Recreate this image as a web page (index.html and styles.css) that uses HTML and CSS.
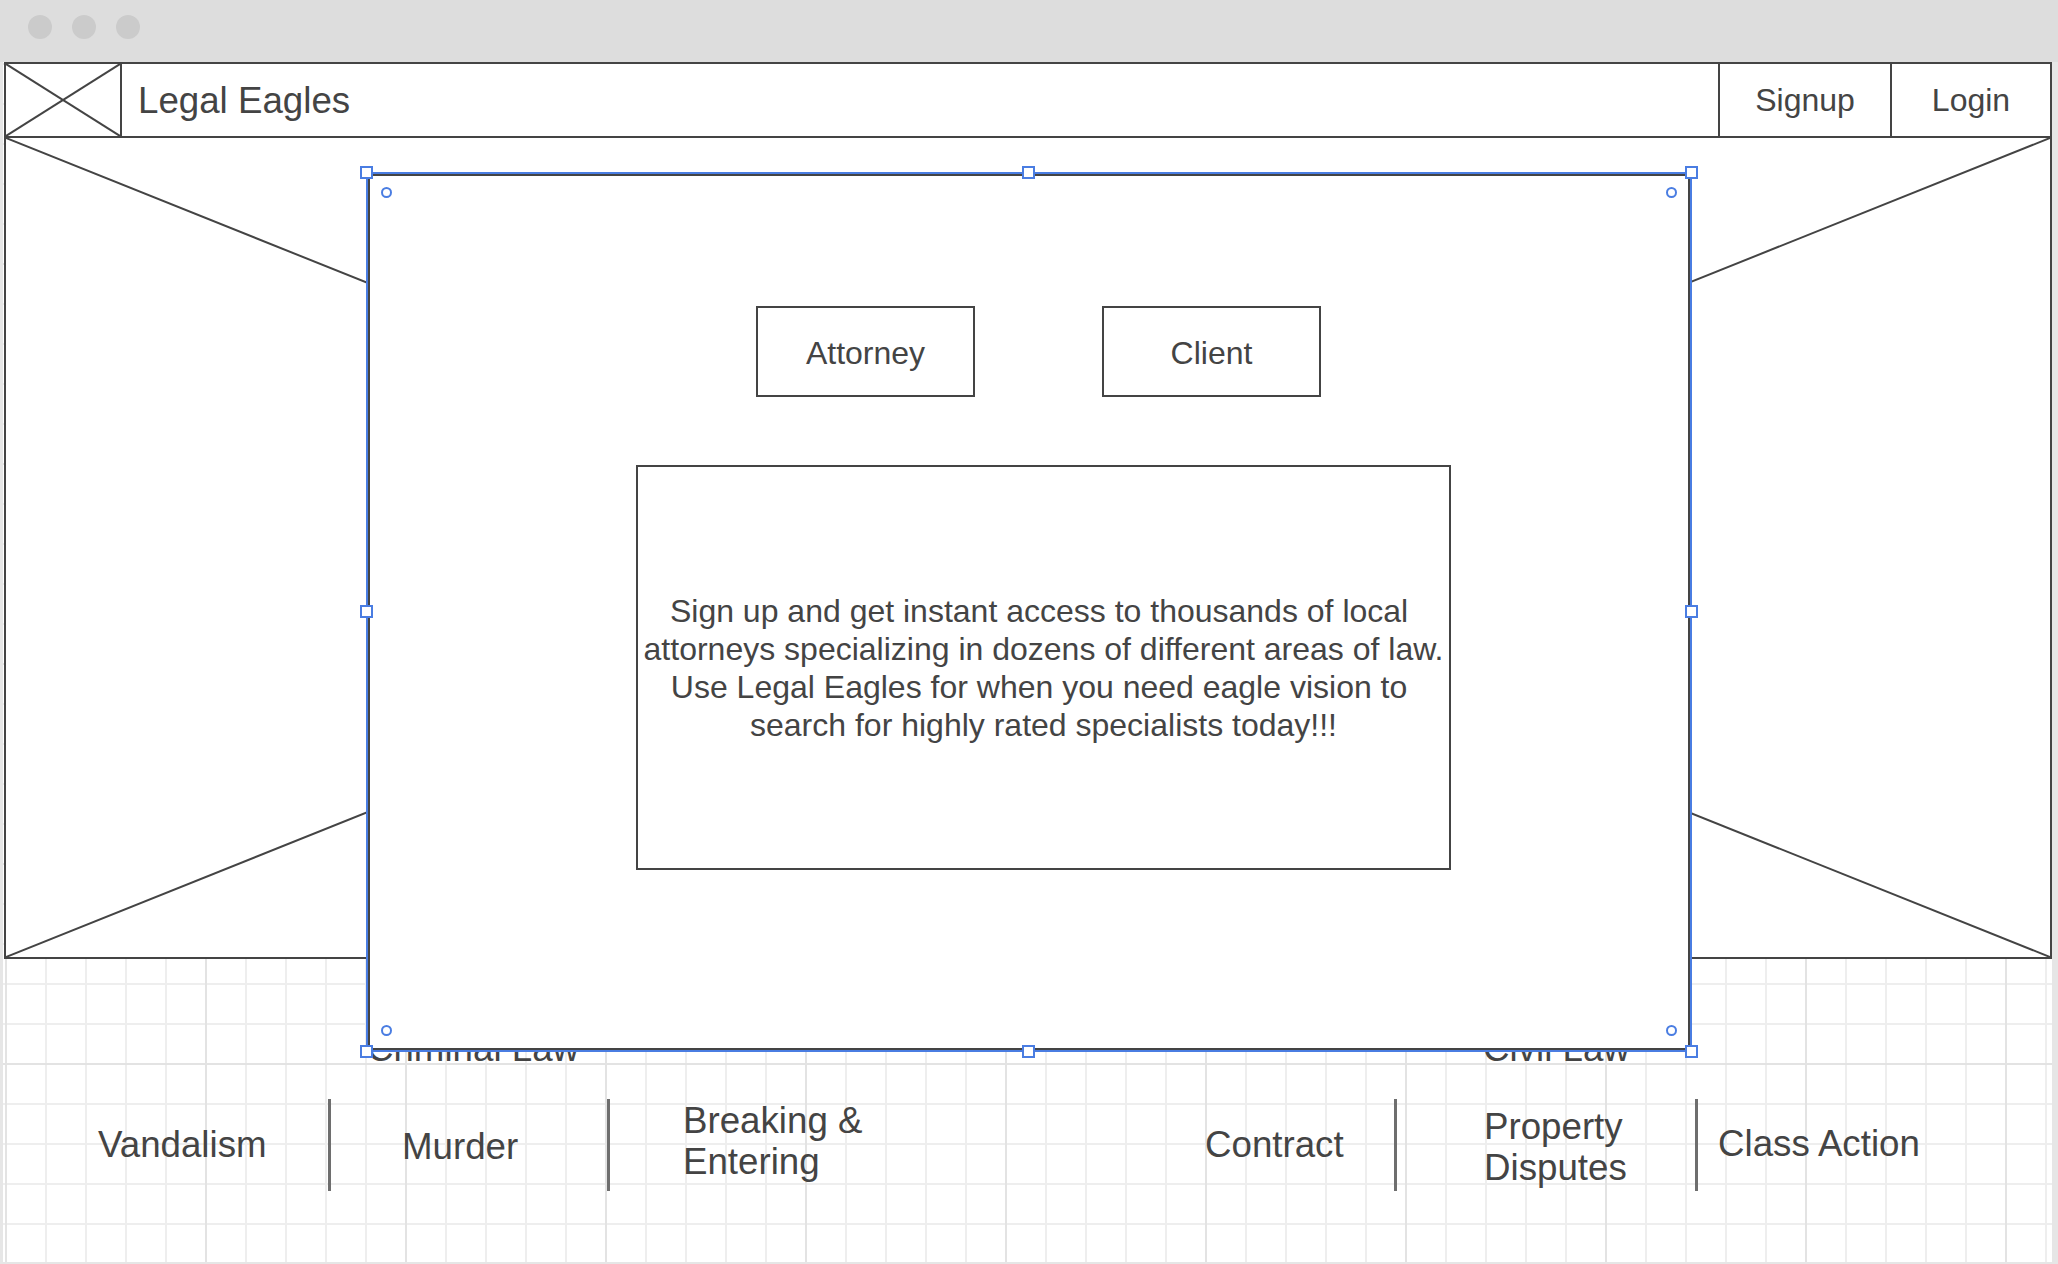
FILE: index.html
```html
<!DOCTYPE html>
<html lang="en">
<head>
  <meta charset="UTF-8" />
  <meta name="viewport" content="width=device-width, initial-scale=1.0"/>
  <title>Legal Eagles - Signup</title>
  <link rel="stylesheet" href="styles.css">
</head>
<body>
  <div class="window">
    <div class="titlebar">
      <span class="dot"></span>
      <span class="dot"></span>
      <span class="dot"></span>
    </div>

    <div class="canvas">
      <div class="page">
        <header class="nav">
          <div class="logo">
            <svg class="cross" viewBox="0 0 100 100" preserveAspectRatio="none">
              <line x1="0" y1="0" x2="100" y2="100" vector-effect="non-scaling-stroke"/>
              <line x1="100" y1="0" x2="0" y2="100" vector-effect="non-scaling-stroke"/>
            </svg>
          </div>
          <div class="brand">Legal Eagles</div>
          <a class="nav-link signup">Signup</a>
          <a class="nav-link login">Login</a>
        </header>

        <!-- hero image placeholder -->
        <div class="hero">
          <svg class="cross" viewBox="0 0 100 100" preserveAspectRatio="none">
            <line x1="0" y1="0" x2="100" y2="100" vector-effect="non-scaling-stroke"/>
            <line x1="100" y1="0" x2="0" y2="100" vector-effect="non-scaling-stroke"/>
          </svg>
        </div>

        <div class="law-heads">
          <div class="law-head criminal">Criminal Law</div>
          <div class="law-head">Civil Law</div>
        </div>

        <div class="cats">
          <div class="cat cat-vandalism">Vandalism</div>
          <div class="sep"></div>
          <div class="cat cat-murder">Murder</div>
          <div class="sep"></div>
          <div class="cat cat-breaking">Breaking &amp;<br>Entering</div>
          <div class="cat cat-contract">Contract</div>
          <div class="sep"></div>
          <div class="cat cat-property">Property<br>Disputes</div>
          <div class="sep"></div>
          <div class="cat cat-class">Class Action</div>
        </div>
      </div>
    </div>

    <!-- selected signup dialog -->
    <div class="modal">
      <span class="handle h-tl"></span>
      <span class="handle h-tm"></span>
      <span class="handle h-tr"></span>
      <span class="handle h-ml"></span>
      <span class="handle h-mr"></span>
      <span class="handle h-bl"></span>
      <span class="handle h-bm"></span>
      <span class="handle h-br"></span>
      <span class="knob k-tl"></span>
      <span class="knob k-tr"></span>
      <span class="knob k-bl"></span>
      <span class="knob k-br"></span>

      <div class="modal-buttons">
        <button class="choice">Attorney</button>
        <button class="choice">Client</button>
      </div>
      <div class="blurb">
        <p>Sign up and get instant access to thousands of local&nbsp;<br>
        attorneys specializing in dozens of different areas of law.<br>
        Use Legal Eagles for when you need eagle vision to&nbsp;<br>
        search for highly rated specialists today!!!</p>
      </div>
    </div>
  </div>
</body>
</html>
```

FILE: styles.css
```css
body { margin: 0; background: #e6e6e6; font-family: "Liberation Sans", Arial, sans-serif; color: #444; }
.window { position: relative; width: 2058px; height: 1264px; overflow: hidden; }

.titlebar {
  height: 62px;
  background: #dddddd;
  display: flex;
  align-items: flex-start;
  gap: 20px;
  padding: 15px 0 0 28px;
  box-sizing: border-box;
}
.dot { width: 24px; height: 24px; border-radius: 50%; background: #cbcbcb; }

/* drawing canvas with the light grid */
.canvas {
  margin-left: 3px;
  width: 2049px;
  height: 1200px;
  background-color: #fff;
  background-image:
    linear-gradient(to right, #e3e3e3 2px, transparent 2px),
    linear-gradient(to bottom, #e3e3e3 2px, transparent 2px),
    linear-gradient(to right, #eeeeee 2px, transparent 2px),
    linear-gradient(to bottom, #eeeeee 2px, transparent 2px);
  background-size: 200px 200px, 200px 200px, 40px 40px, 40px 40px;
  background-position: 2px 1px;
}
.page { margin-left: 1px; width: 2048px; }

.cross { display: block; width: 100%; height: 100%; }
.cross line { stroke: #444; stroke-width: 2; }

.nav {
  display: flex;
  height: 76px;
  border: 2px solid #444;
  box-sizing: border-box;
  background: #fff;
}
.logo { width: 116px; flex-shrink: 0; border-right: 2px solid #444; box-sizing: border-box; }
.brand { flex: 1; padding: 2px 0 0 16px; font-size: 36.7px; display: flex; align-items: center; }
.nav-link {
  flex-shrink: 0;
  box-sizing: border-box;
  border-left: 2px solid #444;
  font-size: 32px;
  display: flex;
  align-items: center;
  justify-content: center;
}
.signup { width: 172px; }
.login { width: 160px; }

.hero {
  height: 821px;
  border: 2px solid #444;
  border-top: none;
  box-sizing: border-box;
  background: #fff;
}

.law-heads { display: flex; margin-top: 69px; padding-left: 363px; font-size: 36.7px; line-height: 41px; }
.law-head.criminal { width: 1116px; }

.cats { display: flex; align-items: center; height: 96px; margin-top: 27px; font-size: 36.7px; line-height: 41px; }
.cat { flex-shrink: 0; box-sizing: border-box; white-space: nowrap; }
.sep { flex-shrink: 0; width: 3px; height: 92px; margin-top: 2px; background: #6e6e6e; }
.cat-vandalism { width: 324px; padding-left: 94px; }
.cat-murder { width: 276px; padding-left: 71px; margin-top: 5px; }
.cat-breaking { width: 595px; padding-left: 73px; margin-bottom: 6px; }
.cat-contract { width: 189px; }
.cat-property { width: 298px; padding-left: 87px; margin-top: 6px; }
.cat-class { padding-left: 20px; margin-bottom: 2px; }

/* dialog */
.modal {
  position: absolute;
  left: 366px;
  top: 172px;
  width: 1326px;
  height: 880px;
  box-sizing: border-box;
  border: 2px solid #4a7de2;
  box-shadow: inset 0 0 0 2px #444;
  background: #fff;
  padding-top: 132px;
}
.modal-buttons { display: flex; gap: 127px; margin-left: 388px; }
.choice {
  width: 219px;
  height: 91px;
  box-sizing: border-box;
  border: 2px solid #444;
  background: #fff;
  color: #444;
  font-family: inherit;
  font-size: 32px;
  padding: 3px 0 0;
}
.blurb {
  margin: 68px 0 0 268px;
  width: 815px;
  height: 405px;
  box-sizing: border-box;
  border: 2px solid #444;
  padding-top: 1px;
  display: flex;
  align-items: center;
  justify-content: center;
  text-align: center;
  font-size: 32px;
  line-height: 38px;
  white-space: nowrap;
}
.blurb p { margin: 0; }

.handle { position: absolute; width: 13px; height: 13px; box-sizing: border-box; border: 2px solid #4a7de2; background: #fff; }
.h-tl { left: -8px; top: -8px; }
.h-tm { left: 50%; margin-left: -7px; top: -8px; }
.h-tr { right: -8px; top: -8px; }
.h-ml { left: -8px; top: 50%; margin-top: -7px; }
.h-mr { right: -8px; top: 50%; margin-top: -7px; }
.h-bl { left: -8px; bottom: -8px; }
.h-bm { left: 50%; margin-left: -7px; bottom: -8px; }
.h-br { right: -8px; bottom: -8px; }

.knob { position: absolute; width: 11px; height: 11px; box-sizing: border-box; border: 2px solid #4a7de2; border-radius: 50%; }
.k-tl { left: 13px; top: 13px; }
.k-tr { right: 13px; top: 13px; }
.k-bl { left: 13px; bottom: 14px; }
.k-br { right: 13px; bottom: 14px; }
```
